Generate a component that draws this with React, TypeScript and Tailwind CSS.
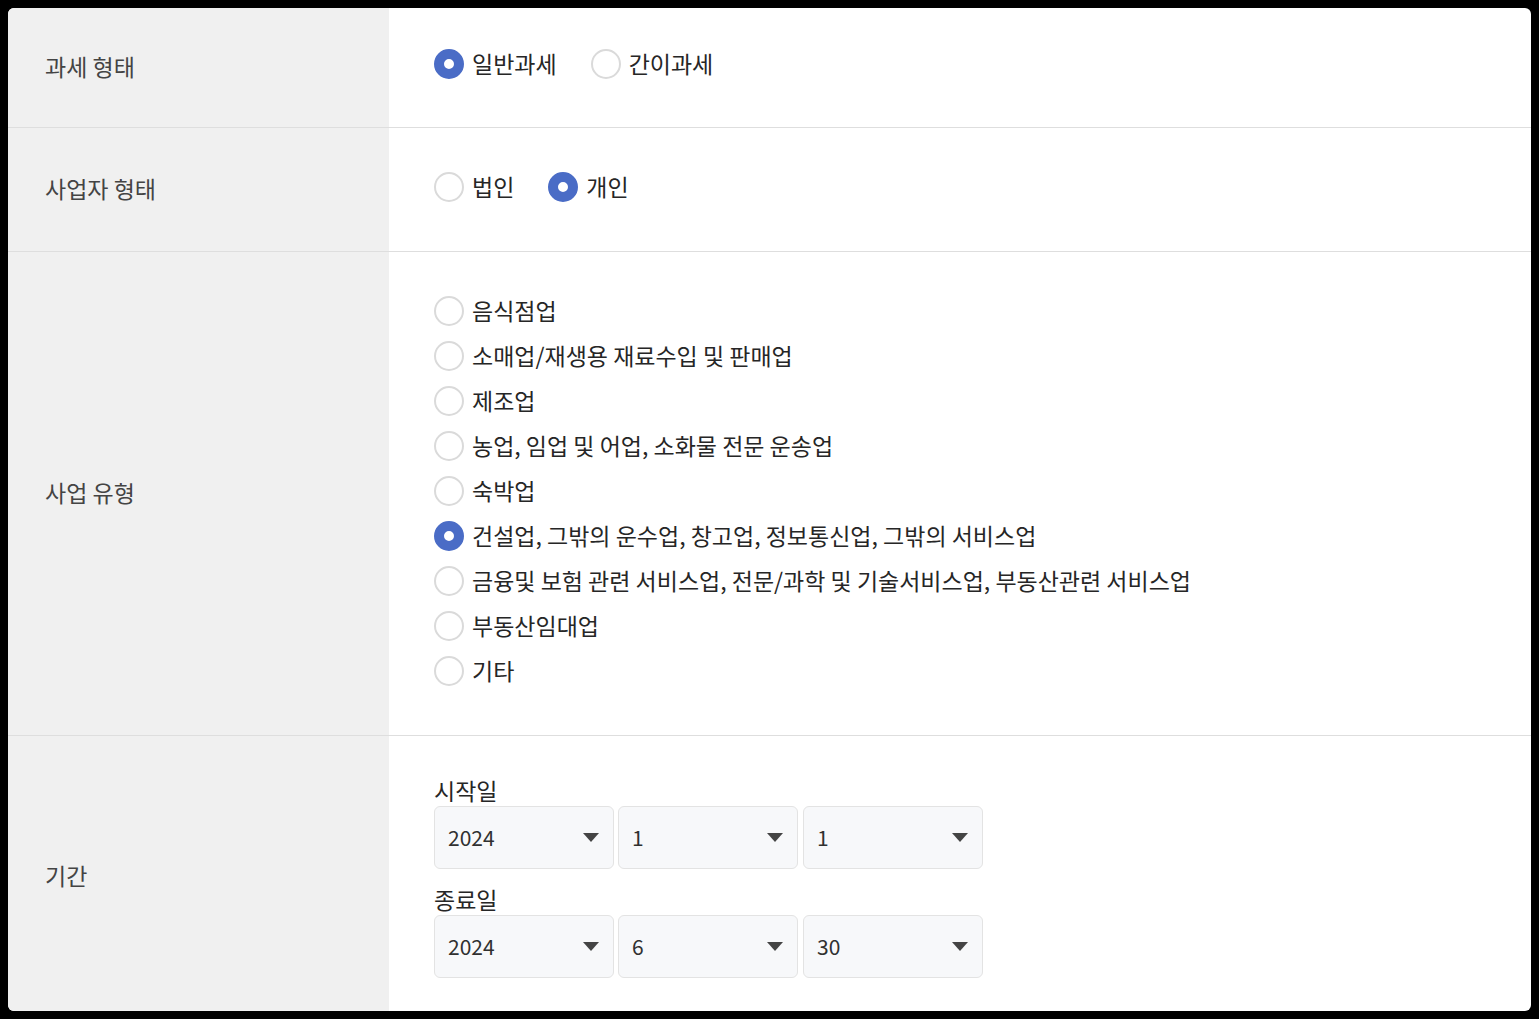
import React, { useState } from "react";

const font = { fontFamily: '"Noto Sans CJK KR", "Noto Sans", sans-serif' };

function Radio({ checked, label, onClick }: { checked: boolean; label: string; onClick: () => void }) {
  return (
    <label className="flex items-center h-[45px] cursor-pointer" onClick={onClick}>
      {checked ? (
        <span className="w-[30px] h-[30px] rounded-full border-[10px] border-[#4a6cc6] bg-white shrink-0" />
      ) : (
        <span className="w-[30px] h-[30px] rounded-full border-2 border-[#dadada] bg-white shrink-0" />
      )}
      <span className="ml-[8px] text-[23px] text-[#262626] leading-none">{label}</span>
    </label>
  );
}

function Row({ label, children }: { label: string; children: React.ReactNode }) {
  return (
    <div className="flex border-b border-[#dedede]">
      <div className="w-[381px] shrink-0 bg-[#f0f0f0] flex items-center pl-[37px] pb-[3px] text-[23px] text-[#444]">
        {label}
      </div>
      <div className="flex-1 pl-[45px]">{children}</div>
    </div>
  );
}

function Select({ value }: { value: string }) {
  return (
    <div className="w-[180px] h-[63px] rounded-[6px] border border-[#e3e3e3] bg-[#f7f8fa] flex items-center justify-between pl-[13px] pr-[14px]">
      <span className="text-[21px] text-[#303030]">{value}</span>
      <svg width="16" height="9" viewBox="0 0 16 9">
        <path d="M0 0 L16 0 L8 9 Z" fill="#444" />
      </svg>
    </div>
  );
}

export default function App() {
  const [tax, setTax] = useState("일반과세");
  const [biz, setBiz] = useState("개인");
  const [type, setType] = useState("건설업, 그밖의 운수업, 창고업, 정보통신업, 그밖의 서비스업");
  const types = [
    "음식점업",
    "소매업/재생용 재료수입 및 판매업",
    "제조업",
    "농업, 임업 및 어업, 소화물 전문 운송업",
    "숙박업",
    "건설업, 그밖의 운수업, 창고업, 정보통신업, 그밖의 서비스업",
    "금융및 보험 관련 서비스업, 전문/과학 및 기술서비스업, 부동산관련 서비스업",
    "부동산임대업",
    "기타",
  ];

  return (
    <div className="min-h-screen bg-black p-[8px]" style={font}>
      <div className="bg-white rounded-[6px] overflow-hidden h-[1003px] flex flex-col">
        <Row label="과세 형태">
          <div className="flex gap-[34px] pt-[33px] pb-[41px]">
            {["일반과세", "간이과세"].map((t) => (
              <Radio key={t} checked={tax === t} label={t} onClick={() => setTax(t)} />
            ))}
          </div>
        </Row>
        <Row label="사업자 형태">
          <div className="flex gap-[34px] pt-[36px] pb-[42px]">
            {["법인", "개인"].map((t) => (
              <Radio key={t} checked={biz === t} label={t} onClick={() => setBiz(t)} />
            ))}
          </div>
        </Row>
        <Row label="사업 유형">
          <div className="flex flex-col pt-[36px] pb-[42px]">
            {types.map((t) => (
              <Radio key={t} checked={type === t} label={t} onClick={() => setType(t)} />
            ))}
          </div>
        </Row>
        <div className="flex flex-1">
          <div className="w-[381px] shrink-0 bg-[#f0f0f0] flex items-center pl-[37px] pt-[4px] text-[23px] text-[#444]">
            기간
          </div>
          <div className="flex-1 pl-[45px] pt-[39px]">
            <div className="text-[23px] text-[#262626] h-[31px] leading-[31px]">시작일</div>
            <div className="flex gap-[4px]">
              <Select value="2024" />
              <Select value="1" />
              <div className="ml-px">
                <Select value="1" />
              </div>
            </div>
            <div className="text-[23px] text-[#262626] h-[31px] leading-[31px] mt-[15px]">종료일</div>
            <div className="flex gap-[4px]">
              <Select value="2024" />
              <Select value="6" />
              <div className="ml-px">
                <Select value="30" />
              </div>
            </div>
          </div>
        </div>
      </div>
    </div>
  );
}
